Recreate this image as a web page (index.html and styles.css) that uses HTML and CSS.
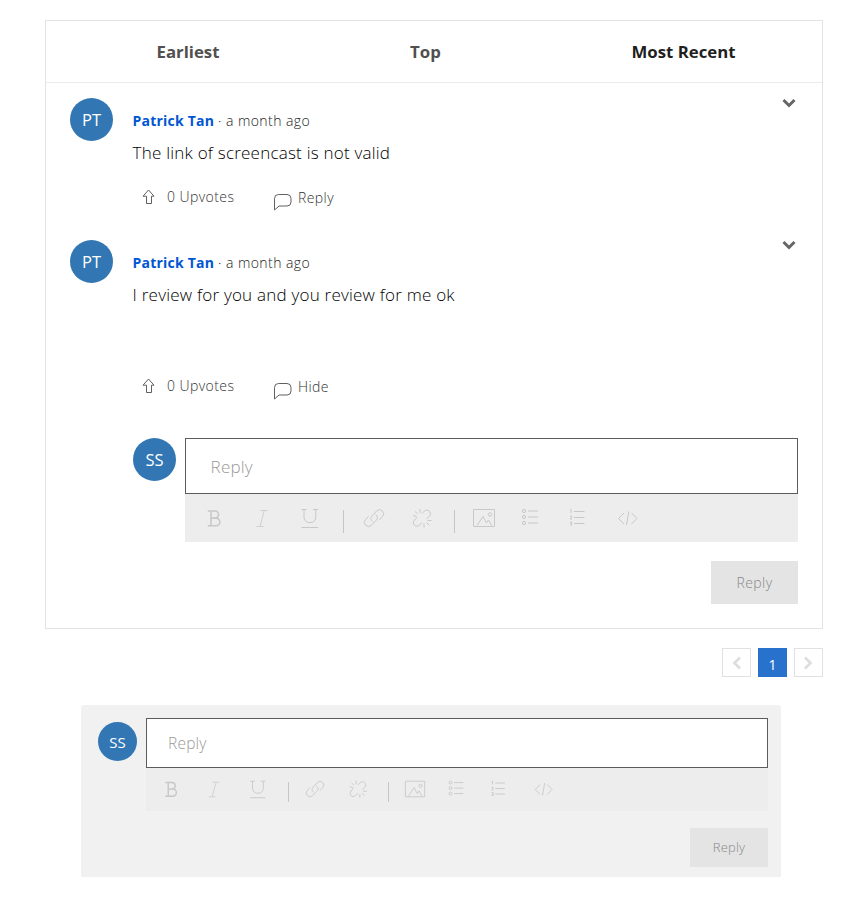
FILE: index.html
```html
<!DOCTYPE html>
<html lang="en">
<head>
<meta charset="utf-8">
<title>Discussion</title>
<link rel="stylesheet" href="styles.css">
</head>
<body>
<svg class="sprite" aria-hidden="true">
  <symbol id="bold" viewBox="0 0 24 24"><path stroke-width="1.6" d="M5.800 5H13a3.500 3.500 0 0 1 0 7.100H9M13 12.100h1a3.800 3.800 0 0 1 0 7.700H5.800M9 5v15"/></symbol>
  <symbol id="italic" viewBox="0 0 24 24"><path d="M10 4.500h8M6.500 20.500h7M14.300 4.500L10 20.500"/></symbol>
  <symbol id="underline" viewBox="0 0 24 24"><path d="M3.500 3.500h5M15 3.500h5M6 3.500v8.200a6 6 0 0 0 11.800 0V3.500M3.500 21.500h16.500"/></symbol>
  <symbol id="link" viewBox="0 0 24 24"><path d="M10.500 15.500c-2.600-1.800-1.800-4.200-.2-5.900l4.400-4.700a4 4 0 0 1 5.700 5.700l-3 3.300M13.500 8.700c2.700 1.500 2.200 4.100.4 5.900l-4.600 4.700a4 4 0 0 1-5.700-5.700l3-3.200"/></symbol>
  <symbol id="unlink" viewBox="0 0 24 24"><path d="M12 7.500l2.300-2.400c3.500-3 8 1.200 5.200 5l-2.700 2.800M12 16.500l-2.600 2.700c-3.600 3-8-1.200-5.100-5l2.900-3M3 9.500l3.500 1M5 5.500l2.600 2.300M10 3v4M14 17.500v4M16.500 16.500l2.700 2.700M17.500 14.500h4"/></symbol>
  <symbol id="image" viewBox="0 0 24 24"><path d="M1.500 3.500h21v17h-21zM5 19.500l6-9 3.500 6.500 2-3 3 5.500"/><circle cx="18" cy="8.500" r="1.700"/></symbol>
  <symbol id="bullets" viewBox="0 0 24 24"><path d="M10 5h10M10 11h10M10 17h10"/><circle cx="6" cy="5" r="1.600"/><circle cx="6" cy="11" r="1.600"/><circle cx="6" cy="17" r="1.600"/></symbol>
  <symbol id="numbers" viewBox="0 0 24 24"><path d="M9 5.500h10.500M9 11.500h10.500M9 17.500h10.500M5 4l1-.5V7M5 10h1.700v1.500L5 13h2M5 16h1.700v3H5M5.500 17.500h1.200"/></symbol>
  <symbol id="code" viewBox="0 0 24 24"><path d="M9 7l-5.500 5.500L9 18M16.500 7l5.500 5.500-5.500 5.500M13.800 5.500l-2.300 13.500"/></symbol>
  <symbol id="upvote" viewBox="0 0 14 16"><path d="M6.500 1l5.500 6.200H9.500V14.500h-5V7.200H1z"/></symbol>
  <symbol id="bubble" viewBox="0 0 18 17"><path d="M.5 16V4.500a4 4 0 0 1 4-4h8.500a4 4 0 0 1 4 4V8a4 4 0 0 1-4 4H5z"/></symbol>
  <symbol id="chevron" viewBox="0 0 14 10"><path d="M1.500 2l5.500 5.500L12.500 2"/></symbol>
</svg>

<main class="thread">
  <nav class="tabs">
    <span class="tab">Earliest</span>
    <span class="tab">Top</span>
    <span class="tab tab-active">Most Recent</span>
  </nav>

  <article class="comment">
    <div class="avatar">PT</div>
    <div class="comment-body">
      <p class="meta"><b>Patrick Tan</b> · a month ago</p>
      <p class="message">The link of screencast is not valid</p>
      <div class="actions">
        <svg class="upvote"><use href="#upvote"/></svg><span class="votes">0 Upvotes</span>
        <svg class="bubble"><use href="#bubble"/></svg><span class="toggle">Reply</span>
      </div>
    </div>
    <svg class="more"><use href="#chevron"/></svg>
  </article>

  <article class="comment comment-open">
    <div class="avatar">PT</div>
    <div class="comment-body">
      <p class="meta"><b>Patrick Tan</b> · a month ago</p>
      <p class="message">I review for you and you review for me ok</p>
      <div class="actions">
        <svg class="upvote"><use href="#upvote"/></svg><span class="votes">0 Upvotes</span>
        <svg class="bubble"><use href="#bubble"/></svg><span class="toggle">Hide</span>
      </div>
    </div>
    <svg class="more"><use href="#chevron"/></svg>
  </article>

  <section class="composer">
    <div class="avatar">SS</div>
    <div class="editor">
      <div class="field">Reply</div>
      <div class="toolbar">
        <svg><use href="#bold"/></svg><svg class="faint"><use href="#italic"/></svg><svg><use href="#underline"/></svg>
        <i class="divider"></i>
        <svg><use href="#link"/></svg><svg><use href="#unlink"/></svg>
        <i class="divider"></i>
        <svg><use href="#image"/></svg><svg><use href="#bullets"/></svg><svg><use href="#numbers"/></svg><svg><use href="#code"/></svg>
      </div>
      <div class="submit">Reply</div>
    </div>
  </section>
</main>

<nav class="pager">
  <span class="page"><svg class="previous"><use href="#chevron"/></svg></span>
  <span class="page page-current">1</span>
  <span class="page"><svg class="next"><use href="#chevron"/></svg></span>
</nav>

<section class="composer composer-small">
  <div class="avatar">SS</div>
  <div class="editor">
    <div class="field">Reply</div>
    <div class="toolbar">
      <svg><use href="#bold"/></svg><svg class="faint"><use href="#italic"/></svg><svg><use href="#underline"/></svg>
      <i class="divider"></i>
      <svg><use href="#link"/></svg><svg><use href="#unlink"/></svg>
      <i class="divider"></i>
      <svg><use href="#image"/></svg><svg><use href="#bullets"/></svg><svg><use href="#numbers"/></svg><svg><use href="#code"/></svg>
    </div>
    <div class="submit">Reply</div>
  </div>
</section>
</body>
</html>
```
FILE: styles.css
```css
* { box-sizing: border-box; }
body {
  margin: 0;
  padding-top: 20px;
  background: #fff;
  color: #1f1f1f;
  font-family: "Open Sans", sans-serif;
  font-weight: 400;
}
p { margin: 0; }
svg { display: block; fill: none; stroke: currentColor; stroke-width: 1; flex: none; }
.sprite { display: none; }

.thread {
  width: 778px;
  height: 609px;
  margin-left: 45px;
  border: 1px solid #e3e3e3;
}
.tabs {
  display: flex;
  align-items: center;
  justify-content: space-between;
  height: 62px;
  padding: 0 86.5px 0 110.5px;
  border-bottom: 1px solid #ebebeb;
  font-size: 16.8px;
  font-weight: 700;
  color: #505050;
}
.tab-active { color: #1f1f1f; }

.avatar {
  display: flex;
  align-items: center;
  justify-content: center;
  flex: none;
  width: 43px;
  height: 43px;
  border-radius: 50%;
  background: #3277b3;
  color: #fff;
  font-size: 16.5px;
}

.comment { display: flex; height: 142px; padding: 15px 24px 0; }
.comment-open { height: 198px; }
.comment-body { flex: 1; margin-left: 19.6px; padding-top: 12px; }
.meta { font-size: 14px; line-height: 22px; font-weight: 300; color: #222; letter-spacing: .44px; }
.meta b { color: #0056d2; font-weight: 700; letter-spacing: .2px; }
.message { margin-top: 8px; font-size: 17px; line-height: 26px; font-weight: 300; letter-spacing: .22px; color: #000; }
.actions {
  display: flex;
  align-items: flex-start;
  margin-top: 21px;
  color: #333;
  font-size: 14px;
  line-height: 20px;
  font-weight: 300;
  letter-spacing: .42px;
}
.comment-open .actions { margin-top: 68px; }
.actions svg { color: #606060; }
.upvote { width: 14px; height: 16px; margin: 2px 0 0 9.4px; }
.votes { width: 107px; margin-left: 11px; }
.bubble { width: 18px; height: 17px; margin-top: 7px; }
.toggle { margin: 1px 0 0 6px; }
.more { width: 14px; height: 10px; margin: 0 2px; stroke-width: 3; color: #666; }

.composer { display: flex; padding: 15px 24px 0 87px; }
.editor { flex: 1; margin-left: 9px; }
.field {
  display: flex;
  align-items: center;
  height: 56px;
  padding-left: 24.6px;
  border: 1px solid #5c5c5c;
  background: #fff;
  color: #999;
  font-size: 17px;
  font-weight: 300;
  letter-spacing: .2px;
}
.toolbar {
  display: grid;
  grid-template-columns: 48px 47px 50px 17px 43px 53px 13px 46px 46px 48px 52px;
  justify-items: center;
  height: 48px;
  padding: 12px 0 0 5px;
  background: #ededed;
  color: #c8c8c8;
}
.toolbar svg { width: 24px; height: 24px; }
.toolbar .faint { color: #d0d0d0; }
.divider { width: 1px; height: 23px; margin-top: 4px; background: #c5c5c5; }
.submit {
  display: flex;
  align-items: center;
  justify-content: center;
  width: 87px;
  height: 43px;
  margin: 19px 0 0 auto;
  background: #e4e4e4;
  color: #888;
  font-size: 14px;
  font-weight: 300;
  letter-spacing: .45px;
}

.pager { display: flex; gap: 7px; width: 101px; margin: 19px 0 0 722px; }
.page {
  display: flex;
  align-items: center;
  justify-content: center;
  width: 29px;
  height: 29px;
  border: 1px solid #e1e1e1;
  color: #dedede;
}
.page svg { width: 14px; height: 10px; stroke-width: 2.8; }
.page-current { border-color: #2872cd; background: #2872cd; color: #fff; font-size: 14px; font-weight: 500; padding-top: 3px; }
.previous { transform: rotate(90deg); }
.next { transform: translateX(-1px) rotate(-90deg); }

.composer-small {
  width: 700px;
  height: 172px;
  margin: 28px 0 0 81px;
  padding: 13px 13px 0 17px;
  border-radius: 3px 3px 0 0;
  background: #f1f1f1;
}
.composer-small .avatar { width: 39px; height: 39px; margin-top: 4px; font-size: 15px; }
.composer-small .field { height: 50px; padding-left: 21px; font-size: 15.5px; }
.composer-small .toolbar {
  grid-template-columns: 42px 44px 44px 17px 36px 49px 13px 40px 42px 42px 48px;
  height: 43px;
  padding: 10px 0 0 4px;
}
.composer-small .toolbar svg { width: 22px; height: 22px; }
.composer-small .divider { height: 20px; }
.composer-small .submit { width: 78px; height: 39px; margin-top: 17px; padding-bottom: 2px; font-size: 13px; letter-spacing: .15px; }
```
